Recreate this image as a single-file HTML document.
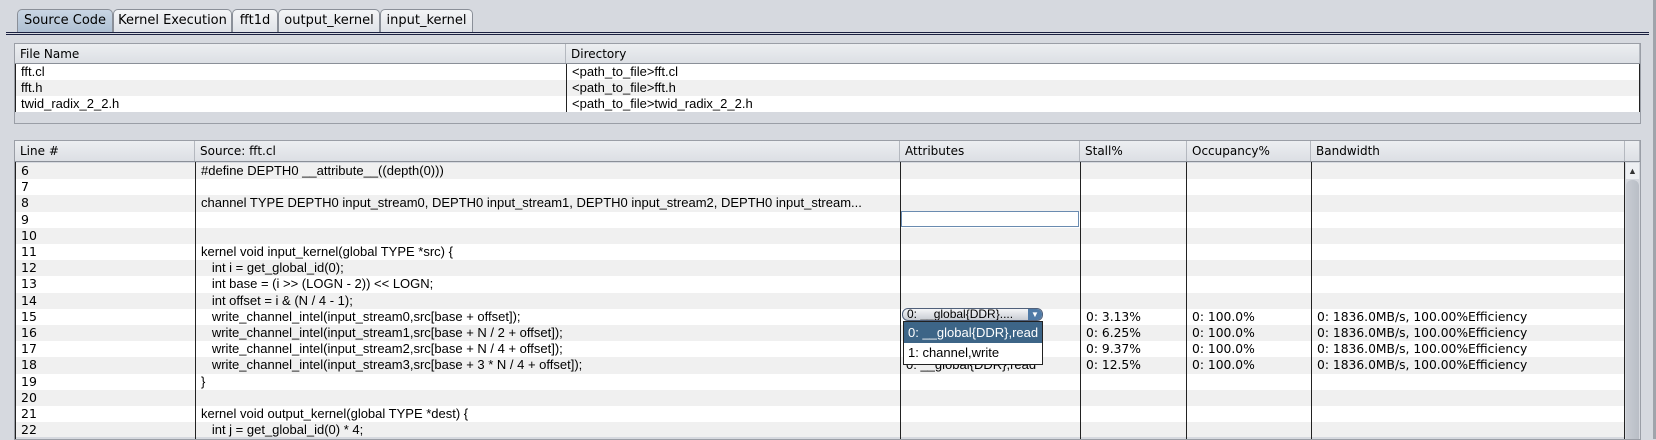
<!DOCTYPE html>
<html><head><style>
body{margin:0;width:1656px;height:439px;background:#d6d9df;overflow:hidden;position:relative;font-family:"Liberation Sans",sans-serif;font-size:13px;color:#000}
.a{position:absolute}
.tab{position:absolute;top:9px;height:23px;border:1px solid #8a8f98;border-bottom:none;border-radius:5px 5px 0 0;background:linear-gradient(#f4f5f7,#dfe2e7);font-family:"DejaVu Sans",sans-serif;font-size:13px;line-height:22px;text-align:center;box-sizing:border-box}
.hdr{position:absolute;height:21px;background:linear-gradient(#eceef1,#dcdfe4);border-top:1px solid #9a9ea6;border-bottom:1px solid #8a8f98;font-family:"DejaVu Sans",sans-serif;font-size:12px;line-height:20px;box-sizing:border-box}
.hc{position:absolute;top:0;height:100%;border-right:1px solid #b4b8bf;padding-left:5px;box-sizing:border-box}
.row{position:absolute;height:16.2px;line-height:16px;white-space:pre}
.c{position:absolute;top:0;height:16px;padding-left:5px;box-sizing:border-box;overflow:hidden}
.ln{font-family:"DejaVu Sans",sans-serif;font-size:12.5px}
.st{font-family:"DejaVu Sans",sans-serif;font-size:12.3px}
.vl{position:absolute;width:1px;background:#222}
</style></head><body>
<div class="a" style="left:1653px;top:0;width:3px;height:439px;background:#a0a4ab"></div>
<div class="tab" style="left:17px;width:96px;background:linear-gradient(#c9d6e4,#aebfd2)">Source Code</div>
<div class="tab" style="left:113px;width:119px">Kernel Execution</div>
<div class="tab" style="left:232px;width:46px">fft1d</div>
<div class="tab" style="left:278px;width:102px">output_kernel</div>
<div class="tab" style="left:380px;width:93px">input_kernel</div>
<div class="a" style="left:6px;top:32px;width:1643px;height:1px;background:#1a2040"></div>
<div class="a" style="left:6px;top:34px;width:1643px;height:1px;background:#1a2040"></div>

<div class="a" style="left:14px;top:43px;width:1627px;height:81px;border:1px solid #9a9ea6;box-sizing:border-box;background:#d6d9df"></div>
<div class="hdr" style="left:15px;top:43px;width:1625px"><div class="hc" style="left:0;width:551px">File Name</div><div class="hc" style="left:551px;width:1074px">Directory</div></div>
<div class="a" style="left:15px;top:64px;width:1625px;height:48px;background:#fff;border-left:1px solid #222;border-right:1px solid #222;box-sizing:border-box"></div>
<div class="row" style="left:16px;top:64px;width:1623px;height:16px;background:#fff"><div class="c" style="left:0">fft.cl</div><div class="c" style="left:551px">&lt;path_to_file&gt;fft.cl</div></div>
<div class="row" style="left:16px;top:80px;width:1623px;height:16px;background:#f0f0f0"><div class="c" style="left:0">fft.h</div><div class="c" style="left:551px">&lt;path_to_file&gt;fft.h</div></div>
<div class="row" style="left:16px;top:96px;width:1623px;height:16px;background:#fff"><div class="c" style="left:0">twid_radix_2_2.h</div><div class="c" style="left:551px">&lt;path_to_file&gt;twid_radix_2_2.h</div></div>
<div class="vl" style="left:566px;top:64px;height:48px"></div>

<div class="a" style="left:14px;top:140px;width:1627px;height:300px;border:1px solid #9a9ea6;box-sizing:border-box"></div>
<div class="hdr" style="left:15px;top:140px;width:1625px;height:22px">
<div class="hc" style="left:0;width:180px">Line #</div>
<div class="hc" style="left:180px;width:705px">Source: fft.cl</div>
<div class="hc" style="left:885px;width:180px">Attributes</div>
<div class="hc" style="left:1065px;width:107px">Stall%</div>
<div class="hc" style="left:1172px;width:124px">Occupancy%</div>
<div class="hc" style="left:1296px;width:314px">Bandwidth</div>
<div class="hc" style="left:1610px;width:15px"></div>
</div>
<div class="a" style="left:0;top:162px;width:1656px;height:275px;overflow:hidden"><div id="rows"></div></div>
<div class="vl" style="left:15px;top:162px;height:277px"></div>
<div class="vl" style="left:195px;top:162px;height:277px"></div>
<div class="vl" style="left:900px;top:162px;height:277px"></div>
<div class="vl" style="left:1080px;top:162px;height:277px"></div>
<div class="vl" style="left:1186px;top:162px;height:277px"></div>
<div class="vl" style="left:1311px;top:162px;height:277px"></div>
<div class="vl" style="left:1624px;top:162px;height:277px"></div>
<div class="a" style="left:1625px;top:162px;width:15px;height:277px;background:#d6d9df"></div>
<div class="a" style="left:1626px;top:163px;width:13px;height:16px;background:#eef0f3;font-size:9px;text-align:center;line-height:16px;color:#333">▲</div>
<div class="a" style="left:1626px;top:180px;width:13px;height:259px;background:linear-gradient(90deg,#c8ccd3,#b9bec6);border-radius:6px 6px 0 0"></div>
<div class="a" style="left:901px;top:211px;width:178px;height:16px;border:1px solid #6a8bb0;box-sizing:border-box;background:#fff"></div>
<div class="a" style="left:902px;top:308px;width:141px;height:13px;border:1px solid #50607a;border-radius:6px;background:linear-gradient(#f4f5f7,#c8ccd3);box-sizing:border-box;font-size:12px;line-height:11px;padding-left:4px;overflow:hidden">0: __global{DDR}....</div>
<div class="a" style="left:1028px;top:309px;width:14px;height:11px;background:#4f7aa6;border-radius:0 6px 6px 0;color:#fff;font-size:8px;text-align:center;line-height:11px">▼</div>
<div class="a" style="left:903px;top:321px;width:140px;height:44px;border:1px solid #222;background:#fff;box-sizing:border-box">
<div style="height:21px;background:#3d6587;color:#fff;line-height:21px;padding-left:4px">0: __global{DDR},read</div>
<div style="height:20px;line-height:20px;padding-left:4px">1: channel,write</div>
</div>
<script>
var src=[
["6","#define DEPTH0 __attribute__((depth(0)))"],["7",""],
["8","channel TYPE DEPTH0 input_stream0, DEPTH0 input_stream1, DEPTH0 input_stream2, DEPTH0 input_stream..."],
["9",""],["10",""],["11","kernel void input_kernel(global TYPE *src) {"],
["12","   int i = get_global_id(0);"],["13","   int base = (i >> (LOGN - 2)) << LOGN;"],
["14","   int offset = i & (N / 4 - 1);"],
["15","   write_channel_intel(input_stream0,src[base + offset]);","0: 3.13%"],
["16","   write_channel_intel(input_stream1,src[base + N / 2 + offset]);","0: 6.25%"],
["17","   write_channel_intel(input_stream2,src[base + N / 4 + offset]);","0: 9.37%"],
["18","   write_channel_intel(input_stream3,src[base + 3 * N / 4 + offset]);","0: 12.5%"],
["19","}"],["20",""],["21","kernel void output_kernel(global TYPE *dest) {"],
["22","   int j = get_global_id(0) * 4;"],["23","   write_channel_intel(output_stream0, dest[j]);"]];
var h="";
src.forEach(function(r,i){
 var y=(1+i*16.2).toFixed(2);
 h+='<div class="row" style="left:16px;top:'+y+'px;width:1609px;background:'+(i%2?'#fff':'#f0f0f0')+'">';
 h+='<div class="c ln" style="left:0">'+r[0]+'</div><div class="c" style="left:180px;width:704px">'+r[1].replace(/</g,'&lt;').replace(/>/g,'&gt;')+'</div>';
 if(r[2]){h+='<div class="c" style="left:885px">0: __global{DDR},read</div><div class="c st" style="left:1065px">'+r[2]+'</div><div class="c st" style="left:1171px">0: 100.0%</div><div class="c st" style="left:1296px">0: 1836.0MB/s, 100.00%Efficiency</div>';}
 h+='</div>';
});
document.getElementById('rows').innerHTML=h;
</script>
</body></html>
